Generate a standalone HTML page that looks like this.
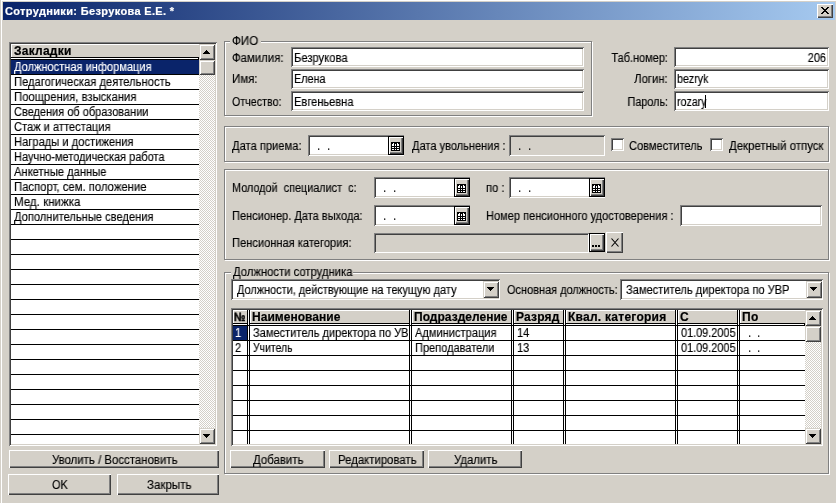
<!DOCTYPE html>
<html lang="ru"><head><meta charset="utf-8"><title>Сотрудники: Безрукова Е.Е.</title>
<style>
html,body{margin:0;padding:0}
body{width:836px;height:503px;overflow:hidden;background:#D4D0C8;position:relative;font-family:"Liberation Sans",sans-serif;font-size:11px}
div{position:absolute;box-sizing:border-box}
.t{position:absolute;white-space:pre;line-height:13px;height:13px;will-change:transform}
</style></head><body>
<div  style="left:1px;top:0px;width:835px;height:1px;background:#fff;"></div>
<div  style="left:1px;top:0px;width:1px;height:503px;background:#fff;"></div>
<div  style="left:3px;top:2px;width:832px;height:18px;background:linear-gradient(to right,#0A246A,#A6CAF0);"></div>
<div  style="left:817px;top:4px;width:16px;height:14px;background:#D4D0C8;box-shadow:inset 1px 1px 0 #fff, inset -1px -1px 0 #404040, inset -2px -2px 0 #808080;"></div>
<svg style="position:absolute;left:821px;top:7px" width="8" height="7" viewBox="0 0 8 7"><path d="M0 0h2v1h1v1h2v-1h1v-1h2v1h-1v1h-1v1h-1v1h1v1h1v1h1v1h-2v-1h-1v-1h-2v1h-1v1h-2v-1h1v-1h1v-1h1v-1h-1v-1h-1v-1h-1z" fill="#000"/></svg>
<div  style="left:9px;top:42px;width:208px;height:404px;background:#fff;box-shadow:inset 1px 1px 0 #808080, inset -1px -1px 0 #fff, inset 2px 2px 0 #404040, inset -2px -2px 0 #D4D0C8;"></div>
<div  style="left:11px;top:44px;width:188px;height:13px;background:#D4D0C8;box-shadow:inset 1px 1px 0 #fff;"></div>
<div  style="left:11px;top:57px;width:188px;height:1px;background:#000;"></div>
<div  style="left:11px;top:58px;width:188px;height:1px;background:#fff;"></div>
<div  style="left:11px;top:59px;width:188px;height:1px;background:#000;"></div>
<div  style="left:198px;top:57px;width:1px;height:3px;background:#000;"></div>
<div  style="left:11px;top:60px;width:188px;height:14px;background:#0A246A;"></div>
<div  style="left:11px;top:74px;width:188px;height:1px;background:#000;"></div>
<div  style="left:11px;top:89px;width:188px;height:1px;background:#000;"></div>
<div  style="left:11px;top:104px;width:188px;height:1px;background:#000;"></div>
<div  style="left:11px;top:119px;width:188px;height:1px;background:#000;"></div>
<div  style="left:11px;top:134px;width:188px;height:1px;background:#000;"></div>
<div  style="left:11px;top:149px;width:188px;height:1px;background:#000;"></div>
<div  style="left:11px;top:164px;width:188px;height:1px;background:#000;"></div>
<div  style="left:11px;top:179px;width:188px;height:1px;background:#000;"></div>
<div  style="left:11px;top:194px;width:188px;height:1px;background:#000;"></div>
<div  style="left:11px;top:209px;width:188px;height:1px;background:#000;"></div>
<div  style="left:11px;top:224px;width:188px;height:1px;background:#000;"></div>
<div  style="left:11px;top:239px;width:188px;height:1px;background:#000;"></div>
<div  style="left:11px;top:254px;width:188px;height:1px;background:#000;"></div>
<div  style="left:11px;top:269px;width:188px;height:1px;background:#000;"></div>
<div  style="left:11px;top:284px;width:188px;height:1px;background:#000;"></div>
<div  style="left:11px;top:299px;width:188px;height:1px;background:#000;"></div>
<div  style="left:11px;top:314px;width:188px;height:1px;background:#000;"></div>
<div  style="left:11px;top:329px;width:188px;height:1px;background:#000;"></div>
<div  style="left:11px;top:344px;width:188px;height:1px;background:#000;"></div>
<div  style="left:11px;top:359px;width:188px;height:1px;background:#000;"></div>
<div  style="left:11px;top:374px;width:188px;height:1px;background:#000;"></div>
<div  style="left:11px;top:389px;width:188px;height:1px;background:#000;"></div>
<div  style="left:11px;top:404px;width:188px;height:1px;background:#000;"></div>
<div  style="left:11px;top:419px;width:188px;height:1px;background:#000;"></div>
<div  style="left:11px;top:434px;width:188px;height:1px;background:#000;"></div>
<div  style="left:199px;top:44px;width:16px;height:400px;background-color:#fff;background-image:linear-gradient(45deg,#D4D0C8 25%,transparent 25%,transparent 75%,#D4D0C8 75%),linear-gradient(45deg,#D4D0C8 25%,transparent 25%,transparent 75%,#D4D0C8 75%);background-size:2px 2px;background-position:0 0,1px 1px;"></div>
<div  style="left:199px;top:44px;width:16px;height:16px;background:#D4D0C8;box-shadow:inset 1px 1px 0 #D4D0C8, inset -1px -1px 0 #404040, inset 2px 2px 0 #fff, inset -2px -2px 0 #808080;"></div>
<div  style="left:206px;top:50px;width:1px;height:1px;background:#000;"></div>
<div  style="left:205px;top:51px;width:3px;height:1px;background:#000;"></div>
<div  style="left:204px;top:52px;width:5px;height:1px;background:#000;"></div>
<div  style="left:203px;top:53px;width:7px;height:1px;background:#000;"></div>
<div  style="left:199px;top:60px;width:16px;height:15px;background:#D4D0C8;box-shadow:inset 1px 1px 0 #D4D0C8, inset -1px -1px 0 #404040, inset 2px 2px 0 #fff, inset -2px -2px 0 #808080;"></div>
<div  style="left:199px;top:428px;width:16px;height:16px;background:#D4D0C8;box-shadow:inset 1px 1px 0 #D4D0C8, inset -1px -1px 0 #404040, inset 2px 2px 0 #fff, inset -2px -2px 0 #808080;"></div>
<div  style="left:203px;top:434px;width:7px;height:1px;background:#000;"></div>
<div  style="left:204px;top:435px;width:5px;height:1px;background:#000;"></div>
<div  style="left:205px;top:436px;width:3px;height:1px;background:#000;"></div>
<div  style="left:206px;top:437px;width:1px;height:1px;background:#000;"></div>
<div  style="left:9px;top:450px;width:210px;height:18px;background:#D4D0C8;box-shadow:inset 1px 1px 0 #fff, inset -1px -1px 0 #404040, inset -2px -2px 0 #808080;"></div>
<div  style="left:8px;top:474px;width:103px;height:21px;background:#D4D0C8;box-shadow:inset 1px 1px 0 #fff, inset -1px -1px 0 #404040, inset -2px -2px 0 #808080;"></div>
<div  style="left:117px;top:474px;width:102px;height:21px;background:#D4D0C8;box-shadow:inset 1px 1px 0 #fff, inset -1px -1px 0 #404040, inset -2px -2px 0 #808080;"></div>
<div  style="left:225px;top:42px;width:368px;height:75px;border:1px solid #fff;box-sizing:border-box;"></div>
<div  style="left:224px;top:41px;width:368px;height:75px;border:1px solid #808080;box-sizing:border-box;"></div>
<div  style="left:230px;top:36px;width:31px;height:12px;background:#D4D0C8;"></div>
<div  style="left:291px;top:47px;width:293px;height:20px;background:#fff;box-shadow:inset 1px 1px 0 #808080, inset -1px -1px 0 #fff, inset 2px 2px 0 #404040, inset -2px -2px 0 #D4D0C8;"></div>
<div  style="left:291px;top:69px;width:293px;height:20px;background:#fff;box-shadow:inset 1px 1px 0 #808080, inset -1px -1px 0 #fff, inset 2px 2px 0 #404040, inset -2px -2px 0 #D4D0C8;"></div>
<div  style="left:291px;top:91px;width:293px;height:20px;background:#fff;box-shadow:inset 1px 1px 0 #808080, inset -1px -1px 0 #fff, inset 2px 2px 0 #404040, inset -2px -2px 0 #D4D0C8;"></div>
<div  style="left:674px;top:47px;width:155px;height:20px;background:#fff;box-shadow:inset 1px 1px 0 #808080, inset -1px -1px 0 #fff, inset 2px 2px 0 #404040, inset -2px -2px 0 #D4D0C8;"></div>
<div  style="left:674px;top:69px;width:155px;height:20px;background:#fff;box-shadow:inset 1px 1px 0 #808080, inset -1px -1px 0 #fff, inset 2px 2px 0 #404040, inset -2px -2px 0 #D4D0C8;"></div>
<div  style="left:674px;top:91px;width:155px;height:20px;background:#fff;box-shadow:inset 1px 1px 0 #808080, inset -1px -1px 0 #fff, inset 2px 2px 0 #404040, inset -2px -2px 0 #D4D0C8;"></div>
<div  style="left:705px;top:95px;width:1px;height:13px;background:#000;"></div>
<div  style="left:225px;top:127px;width:605px;height:36px;border:1px solid #fff;box-sizing:border-box;"></div>
<div  style="left:224px;top:126px;width:605px;height:36px;border:1px solid #808080;box-sizing:border-box;"></div>
<div  style="left:308px;top:135px;width:96px;height:21px;background:#fff;box-shadow:inset 1px 1px 0 #808080, inset -1px -1px 0 #fff, inset 2px 2px 0 #404040, inset -2px -2px 0 #D4D0C8;"></div>
<div  style="left:388px;top:136px;width:16px;height:19px;background:#D4D0C8;border:1px solid #000;box-sizing:border-box;box-shadow:inset 1px 1px 0 #fff, inset -1px -1px 0 #404040, inset -2px -2px 0 #808080;"></div>
<div  style="left:391px;top:142px;width:9px;height:9px;background:#000;"></div>
<div  style="left:392px;top:144px;width:7px;height:6px;background:#fff;"></div>
<div  style="left:393px;top:143px;width:1px;height:1px;background:#fff;"></div>
<div  style="left:397px;top:143px;width:1px;height:1px;background:#fff;"></div>
<div  style="left:394px;top:144px;width:1px;height:6px;background:#000;"></div>
<div  style="left:396px;top:144px;width:1px;height:6px;background:#000;"></div>
<div  style="left:392px;top:146px;width:7px;height:1px;background:#000;"></div>
<div  style="left:392px;top:148px;width:7px;height:1px;background:#000;"></div>
<div  style="left:509px;top:135px;width:96px;height:21px;background:#D4D0C8;box-shadow:inset 1px 1px 0 #808080, inset -1px -1px 0 #fff, inset 2px 2px 0 #404040, inset -2px -2px 0 #D4D0C8;"></div>
<div  style="left:611px;top:138px;width:13px;height:13px;background:#fff;box-shadow:inset 1px 1px 0 #808080, inset -1px -1px 0 #fff, inset 2px 2px 0 #404040, inset -2px -2px 0 #D4D0C8;"></div>
<div  style="left:710px;top:138px;width:13px;height:13px;background:#fff;box-shadow:inset 1px 1px 0 #808080, inset -1px -1px 0 #fff, inset 2px 2px 0 #404040, inset -2px -2px 0 #D4D0C8;"></div>
<div  style="left:225px;top:170px;width:605px;height:91px;border:1px solid #fff;box-sizing:border-box;"></div>
<div  style="left:224px;top:169px;width:605px;height:91px;border:1px solid #808080;box-sizing:border-box;"></div>
<div  style="left:374px;top:177px;width:96px;height:21px;background:#fff;box-shadow:inset 1px 1px 0 #808080, inset -1px -1px 0 #fff, inset 2px 2px 0 #404040, inset -2px -2px 0 #D4D0C8;"></div>
<div  style="left:454px;top:178px;width:16px;height:19px;background:#D4D0C8;border:1px solid #000;box-sizing:border-box;box-shadow:inset 1px 1px 0 #fff, inset -1px -1px 0 #404040, inset -2px -2px 0 #808080;"></div>
<div  style="left:457px;top:184px;width:9px;height:9px;background:#000;"></div>
<div  style="left:458px;top:186px;width:7px;height:6px;background:#fff;"></div>
<div  style="left:459px;top:185px;width:1px;height:1px;background:#fff;"></div>
<div  style="left:463px;top:185px;width:1px;height:1px;background:#fff;"></div>
<div  style="left:460px;top:186px;width:1px;height:6px;background:#000;"></div>
<div  style="left:462px;top:186px;width:1px;height:6px;background:#000;"></div>
<div  style="left:458px;top:188px;width:7px;height:1px;background:#000;"></div>
<div  style="left:458px;top:190px;width:7px;height:1px;background:#000;"></div>
<div  style="left:509px;top:177px;width:96px;height:21px;background:#fff;box-shadow:inset 1px 1px 0 #808080, inset -1px -1px 0 #fff, inset 2px 2px 0 #404040, inset -2px -2px 0 #D4D0C8;"></div>
<div  style="left:589px;top:178px;width:16px;height:19px;background:#D4D0C8;border:1px solid #000;box-sizing:border-box;box-shadow:inset 1px 1px 0 #fff, inset -1px -1px 0 #404040, inset -2px -2px 0 #808080;"></div>
<div  style="left:592px;top:184px;width:9px;height:9px;background:#000;"></div>
<div  style="left:593px;top:186px;width:7px;height:6px;background:#fff;"></div>
<div  style="left:594px;top:185px;width:1px;height:1px;background:#fff;"></div>
<div  style="left:598px;top:185px;width:1px;height:1px;background:#fff;"></div>
<div  style="left:595px;top:186px;width:1px;height:6px;background:#000;"></div>
<div  style="left:597px;top:186px;width:1px;height:6px;background:#000;"></div>
<div  style="left:593px;top:188px;width:7px;height:1px;background:#000;"></div>
<div  style="left:593px;top:190px;width:7px;height:1px;background:#000;"></div>
<div  style="left:374px;top:205px;width:96px;height:21px;background:#fff;box-shadow:inset 1px 1px 0 #808080, inset -1px -1px 0 #fff, inset 2px 2px 0 #404040, inset -2px -2px 0 #D4D0C8;"></div>
<div  style="left:454px;top:206px;width:16px;height:19px;background:#D4D0C8;border:1px solid #000;box-sizing:border-box;box-shadow:inset 1px 1px 0 #fff, inset -1px -1px 0 #404040, inset -2px -2px 0 #808080;"></div>
<div  style="left:457px;top:212px;width:9px;height:9px;background:#000;"></div>
<div  style="left:458px;top:214px;width:7px;height:6px;background:#fff;"></div>
<div  style="left:459px;top:213px;width:1px;height:1px;background:#fff;"></div>
<div  style="left:463px;top:213px;width:1px;height:1px;background:#fff;"></div>
<div  style="left:460px;top:214px;width:1px;height:6px;background:#000;"></div>
<div  style="left:462px;top:214px;width:1px;height:6px;background:#000;"></div>
<div  style="left:458px;top:216px;width:7px;height:1px;background:#000;"></div>
<div  style="left:458px;top:218px;width:7px;height:1px;background:#000;"></div>
<div  style="left:680px;top:205px;width:142px;height:21px;background:#fff;box-shadow:inset 1px 1px 0 #808080, inset -1px -1px 0 #fff, inset 2px 2px 0 #404040, inset -2px -2px 0 #D4D0C8;"></div>
<div  style="left:374px;top:233px;width:215px;height:20px;background:#D4D0C8;box-shadow:inset 1px 1px 0 #808080, inset -1px -1px 0 #fff, inset 2px 2px 0 #404040, inset -2px -2px 0 #D4D0C8;"></div>
<div  style="left:589px;top:233px;width:16px;height:19px;background:#D4D0C8;border:1px solid #000;box-sizing:border-box;box-shadow:inset 1px 1px 0 #fff, inset -1px -1px 0 #404040, inset -2px -2px 0 #808080;"></div>
<div  style="left:592px;top:245px;width:2px;height:2px;background:#000;"></div>
<div  style="left:595px;top:245px;width:2px;height:2px;background:#000;"></div>
<div  style="left:598px;top:245px;width:2px;height:2px;background:#000;"></div>
<div  style="left:606px;top:232px;width:17px;height:21px;background:#D4D0C8;box-shadow:inset 1px 1px 0 #fff, inset -1px -1px 0 #404040, inset -2px -2px 0 #808080;"></div>
<svg style="position:absolute;left:611px;top:238px" width="8" height="9" viewBox="0 0 8 9"><path d="M0.5 0.5L7.5 8.5M7.5 0.5L0.5 8.5" stroke="#000" stroke-width="1.1" fill="none"/></svg>
<div  style="left:225px;top:273px;width:605px;height:202px;border:1px solid #fff;box-sizing:border-box;"></div>
<div  style="left:224px;top:272px;width:605px;height:202px;border:1px solid #808080;box-sizing:border-box;"></div>
<div  style="left:231px;top:266px;width:122px;height:12px;background:#D4D0C8;"></div>
<div  style="left:231px;top:279px;width:269px;height:21px;background:#fff;box-shadow:inset 1px 1px 0 #808080, inset -1px -1px 0 #fff, inset 2px 2px 0 #404040, inset -2px -2px 0 #D4D0C8;"></div>
<div  style="left:483px;top:281px;width:16px;height:17px;background:#D4D0C8;box-shadow:inset 1px 1px 0 #D4D0C8, inset -1px -1px 0 #404040, inset 2px 2px 0 #fff, inset -2px -2px 0 #808080;"></div>
<div  style="left:487px;top:287px;width:7px;height:1px;background:#000;"></div>
<div  style="left:488px;top:288px;width:5px;height:1px;background:#000;"></div>
<div  style="left:489px;top:289px;width:3px;height:1px;background:#000;"></div>
<div  style="left:490px;top:290px;width:1px;height:1px;background:#000;"></div>
<div  style="left:620px;top:279px;width:203px;height:21px;background:#fff;box-shadow:inset 1px 1px 0 #808080, inset -1px -1px 0 #fff, inset 2px 2px 0 #404040, inset -2px -2px 0 #D4D0C8;"></div>
<div  style="left:806px;top:281px;width:16px;height:17px;background:#D4D0C8;box-shadow:inset 1px 1px 0 #D4D0C8, inset -1px -1px 0 #404040, inset 2px 2px 0 #fff, inset -2px -2px 0 #808080;"></div>
<div  style="left:810px;top:287px;width:7px;height:1px;background:#000;"></div>
<div  style="left:811px;top:288px;width:5px;height:1px;background:#000;"></div>
<div  style="left:812px;top:289px;width:3px;height:1px;background:#000;"></div>
<div  style="left:813px;top:290px;width:1px;height:1px;background:#000;"></div>
<div  style="left:231px;top:308px;width:592px;height:138px;background:#fff;box-shadow:inset 1px 1px 0 #808080, inset -1px -1px 0 #fff, inset 2px 2px 0 #404040, inset -2px -2px 0 #D4D0C8;"></div>
<div  style="left:233px;top:310px;width:14px;height:13px;background:#D4D0C8;box-shadow:inset 1px 1px 0 #fff;"></div>
<div  style="left:250px;top:310px;width:159px;height:13px;background:#D4D0C8;box-shadow:inset 1px 1px 0 #fff;"></div>
<div  style="left:412px;top:310px;width:99px;height:13px;background:#D4D0C8;box-shadow:inset 1px 1px 0 #fff;"></div>
<div  style="left:514px;top:310px;width:49px;height:13px;background:#D4D0C8;box-shadow:inset 1px 1px 0 #fff;"></div>
<div  style="left:566px;top:310px;width:109px;height:13px;background:#D4D0C8;box-shadow:inset 1px 1px 0 #fff;"></div>
<div  style="left:678px;top:310px;width:59px;height:13px;background:#D4D0C8;box-shadow:inset 1px 1px 0 #fff;"></div>
<div  style="left:740px;top:310px;width:65px;height:13px;background:#D4D0C8;box-shadow:inset 1px 1px 0 #fff;"></div>
<div  style="left:233px;top:323px;width:572px;height:1px;background:#000;"></div>
<div  style="left:233px;top:324px;width:572px;height:1px;background:#fff;"></div>
<div  style="left:804px;top:323px;width:1px;height:3px;background:#000;"></div>
<div  style="left:233px;top:325px;width:572px;height:1px;background:#000;"></div>
<div  style="left:233px;top:340px;width:572px;height:1px;background:#000;"></div>
<div  style="left:233px;top:355px;width:572px;height:1px;background:#000;"></div>
<div  style="left:233px;top:370px;width:572px;height:1px;background:#000;"></div>
<div  style="left:233px;top:385px;width:572px;height:1px;background:#000;"></div>
<div  style="left:233px;top:400px;width:572px;height:1px;background:#000;"></div>
<div  style="left:233px;top:415px;width:572px;height:1px;background:#000;"></div>
<div  style="left:233px;top:430px;width:572px;height:1px;background:#000;"></div>
<div  style="left:247px;top:310px;width:1px;height:134px;background:#000;"></div>
<div  style="left:249px;top:310px;width:1px;height:134px;background:#000;"></div>
<div  style="left:248px;top:310px;width:1px;height:14px;background:#fff;"></div>
<div  style="left:409px;top:310px;width:1px;height:134px;background:#000;"></div>
<div  style="left:411px;top:310px;width:1px;height:134px;background:#000;"></div>
<div  style="left:410px;top:310px;width:1px;height:14px;background:#fff;"></div>
<div  style="left:511px;top:310px;width:1px;height:134px;background:#000;"></div>
<div  style="left:513px;top:310px;width:1px;height:134px;background:#000;"></div>
<div  style="left:512px;top:310px;width:1px;height:14px;background:#fff;"></div>
<div  style="left:563px;top:310px;width:1px;height:134px;background:#000;"></div>
<div  style="left:565px;top:310px;width:1px;height:134px;background:#000;"></div>
<div  style="left:564px;top:310px;width:1px;height:14px;background:#fff;"></div>
<div  style="left:675px;top:310px;width:1px;height:134px;background:#000;"></div>
<div  style="left:677px;top:310px;width:1px;height:134px;background:#000;"></div>
<div  style="left:676px;top:310px;width:1px;height:14px;background:#fff;"></div>
<div  style="left:737px;top:310px;width:1px;height:134px;background:#000;"></div>
<div  style="left:739px;top:310px;width:1px;height:134px;background:#000;"></div>
<div  style="left:738px;top:310px;width:1px;height:14px;background:#fff;"></div>
<div  style="left:805px;top:310px;width:1px;height:134px;background:#000;"></div>
<div  style="left:233px;top:326px;width:14px;height:14px;background:#0A246A;"></div>
<div  style="left:805px;top:310px;width:16px;height:134px;background-color:#fff;background-image:linear-gradient(45deg,#D4D0C8 25%,transparent 25%,transparent 75%,#D4D0C8 75%),linear-gradient(45deg,#D4D0C8 25%,transparent 25%,transparent 75%,#D4D0C8 75%);background-size:2px 2px;background-position:0 0,1px 1px;"></div>
<div  style="left:805px;top:310px;width:16px;height:16px;background:#D4D0C8;box-shadow:inset 1px 1px 0 #D4D0C8, inset -1px -1px 0 #404040, inset 2px 2px 0 #fff, inset -2px -2px 0 #808080;"></div>
<div  style="left:812px;top:316px;width:1px;height:1px;background:#000;"></div>
<div  style="left:811px;top:317px;width:3px;height:1px;background:#000;"></div>
<div  style="left:810px;top:318px;width:5px;height:1px;background:#000;"></div>
<div  style="left:809px;top:319px;width:7px;height:1px;background:#000;"></div>
<div  style="left:805px;top:326px;width:16px;height:16px;background:#D4D0C8;box-shadow:inset 1px 1px 0 #D4D0C8, inset -1px -1px 0 #404040, inset 2px 2px 0 #fff, inset -2px -2px 0 #808080;"></div>
<div  style="left:805px;top:428px;width:16px;height:16px;background:#D4D0C8;box-shadow:inset 1px 1px 0 #D4D0C8, inset -1px -1px 0 #404040, inset 2px 2px 0 #fff, inset -2px -2px 0 #808080;"></div>
<div  style="left:809px;top:434px;width:7px;height:1px;background:#000;"></div>
<div  style="left:810px;top:435px;width:5px;height:1px;background:#000;"></div>
<div  style="left:811px;top:436px;width:3px;height:1px;background:#000;"></div>
<div  style="left:812px;top:437px;width:1px;height:1px;background:#000;"></div>
<div  style="left:230px;top:450px;width:95px;height:18px;background:#D4D0C8;box-shadow:inset 1px 1px 0 #fff, inset -1px -1px 0 #404040, inset -2px -2px 0 #808080;"></div>
<div  style="left:329px;top:450px;width:95px;height:18px;background:#D4D0C8;box-shadow:inset 1px 1px 0 #fff, inset -1px -1px 0 #404040, inset -2px -2px 0 #808080;"></div>
<div  style="left:428px;top:450px;width:94px;height:18px;background:#D4D0C8;box-shadow:inset 1px 1px 0 #fff, inset -1px -1px 0 #404040, inset -2px -2px 0 #808080;"></div>
<span class="t" style="top:5px;color:#fff;font-size:11px;font-weight:bold;-webkit-text-stroke:0.2px;letter-spacing:0.348px;left:5px;">Сотрудники: Безрукова Е.Е. *</span>
<span class="t" style="top:45px;color:#000;font-size:12px;font-weight:bold;-webkit-text-stroke:0.2px;letter-spacing:0.232px;left:14px;">Закладки</span>
<span class="t" style="top:61px;color:#fff;font-size:12px;-webkit-text-stroke:0.15px;left:14px;transform:scaleX(0.9217);transform-origin:0 0;">Должностная информация</span>
<span class="t" style="top:76px;color:#000;font-size:12px;-webkit-text-stroke:0.15px;left:14px;transform:scaleX(0.9335);transform-origin:0 0;">Педагогическая деятельность</span>
<span class="t" style="top:91px;color:#000;font-size:12px;-webkit-text-stroke:0.15px;left:14px;transform:scaleX(0.9417);transform-origin:0 0;">Поощрения, взыскания</span>
<span class="t" style="top:106px;color:#000;font-size:12px;-webkit-text-stroke:0.15px;left:14px;transform:scaleX(0.9162);transform-origin:0 0;">Сведения об образовании</span>
<span class="t" style="top:121px;color:#000;font-size:12px;-webkit-text-stroke:0.15px;left:14px;transform:scaleX(0.9265);transform-origin:0 0;">Стаж и аттестация</span>
<span class="t" style="top:136px;color:#000;font-size:12px;-webkit-text-stroke:0.15px;left:14px;transform:scaleX(0.9302);transform-origin:0 0;">Награды и достижения</span>
<span class="t" style="top:151px;color:#000;font-size:12px;-webkit-text-stroke:0.15px;left:14px;transform:scaleX(0.9156);transform-origin:0 0;">Научно-методическая работа</span>
<span class="t" style="top:166px;color:#000;font-size:12px;-webkit-text-stroke:0.15px;left:14px;transform:scaleX(0.9317);transform-origin:0 0;">Анкетные данные</span>
<span class="t" style="top:181px;color:#000;font-size:12px;-webkit-text-stroke:0.15px;left:14px;transform:scaleX(0.9423);transform-origin:0 0;">Паспорт, сем. положение</span>
<span class="t" style="top:196px;color:#000;font-size:12px;-webkit-text-stroke:0.15px;left:14px;transform:scaleX(0.9635);transform-origin:0 0;">Мед. книжка</span>
<span class="t" style="top:211px;color:#000;font-size:12px;-webkit-text-stroke:0.15px;left:14px;transform:scaleX(0.9270);transform-origin:0 0;">Дополнительные сведения</span>
<span class="t" style="top:454px;color:#000;font-size:12px;-webkit-text-stroke:0.15px;left:52px;transform:scaleX(0.9514);transform-origin:0 0;">Уволить / Восстановить</span>
<span class="t" style="top:479px;color:#000;font-size:12px;-webkit-text-stroke:0.15px;left:52px;transform:scaleX(0.9150);transform-origin:0 0;">OK</span>
<span class="t" style="top:479px;color:#000;font-size:12px;-webkit-text-stroke:0.15px;left:147px;transform:scaleX(0.9628);transform-origin:0 0;">Закрыть</span>
<span class="t" style="top:35px;color:#000;font-size:12px;-webkit-text-stroke:0.15px;left:232px;transform:scaleX(0.9700);transform-origin:0 0;">ФИО</span>
<span class="t" style="top:52px;color:#000;font-size:12px;-webkit-text-stroke:0.15px;left:232px;transform:scaleX(0.9485);transform-origin:0 0;">Фамилия:</span>
<span class="t" style="top:52px;color:#000;font-size:12px;-webkit-text-stroke:0.15px;left:294px;transform:scaleX(0.9335);transform-origin:0 0;">Безрукова</span>
<span class="t" style="top:73px;color:#000;font-size:12px;-webkit-text-stroke:0.15px;left:232px;transform:scaleX(0.9544);transform-origin:0 0;">Имя:</span>
<span class="t" style="top:73px;color:#000;font-size:12px;-webkit-text-stroke:0.15px;left:294px;transform:scaleX(0.9004);transform-origin:0 0;">Елена</span>
<span class="t" style="top:96px;color:#000;font-size:12px;-webkit-text-stroke:0.15px;left:232px;transform:scaleX(0.8919);transform-origin:0 0;">Отчество:</span>
<span class="t" style="top:96px;color:#000;font-size:12px;-webkit-text-stroke:0.15px;left:294px;transform:scaleX(0.9238);transform-origin:0 0;">Евгеньевна</span>
<span class="t" style="top:52px;color:#000;font-size:12px;-webkit-text-stroke:0.15px;right:168px;transform:scaleX(0.9127);transform-origin:100% 0;">Таб.номер:</span>
<span class="t" style="top:52px;color:#000;font-size:12px;-webkit-text-stroke:0.15px;right:10px;transform:scaleX(0.9150);transform-origin:100% 0;">206</span>
<span class="t" style="top:73px;color:#000;font-size:12px;-webkit-text-stroke:0.15px;right:168px;transform:scaleX(0.9412);transform-origin:100% 0;">Логин:</span>
<span class="t" style="top:73px;color:#000;font-size:12px;-webkit-text-stroke:0.15px;left:677px;transform:scaleX(0.8912);transform-origin:0 0;">bezryk</span>
<span class="t" style="top:96px;color:#000;font-size:12px;-webkit-text-stroke:0.15px;right:168px;transform:scaleX(0.9003);transform-origin:100% 0;">Пароль:</span>
<span class="t" style="top:96px;color:#000;font-size:12px;-webkit-text-stroke:0.15px;left:677px;transform:scaleX(0.8847);transform-origin:0 0;">rozary</span>
<span class="t" style="top:140px;color:#000;font-size:12px;-webkit-text-stroke:0.15px;left:232px;transform:scaleX(0.9302);transform-origin:0 0;">Дата приема:</span>
<span class="t" style="top:140px;color:#000;font-size:12px;-webkit-text-stroke:0.15px;left:317px;transform:scaleX(0.9150);transform-origin:0 0;">.</span>
<span class="t" style="top:140px;color:#000;font-size:12px;-webkit-text-stroke:0.15px;left:327px;transform:scaleX(0.9150);transform-origin:0 0;">.</span>
<span class="t" style="top:140px;color:#000;font-size:12px;-webkit-text-stroke:0.15px;left:412px;transform:scaleX(0.9202);transform-origin:0 0;">Дата увольнения :</span>
<span class="t" style="top:140px;color:#000;font-size:12px;-webkit-text-stroke:0.15px;left:518px;transform:scaleX(0.9150);transform-origin:0 0;">.</span>
<span class="t" style="top:140px;color:#000;font-size:12px;-webkit-text-stroke:0.15px;left:528px;transform:scaleX(0.9150);transform-origin:0 0;">.</span>
<span class="t" style="top:140px;color:#000;font-size:12px;-webkit-text-stroke:0.15px;left:629px;transform:scaleX(0.9234);transform-origin:0 0;">Совместитель</span>
<span class="t" style="top:140px;color:#000;font-size:12px;-webkit-text-stroke:0.15px;left:729px;transform:scaleX(0.9515);transform-origin:0 0;">Декретный отпуск</span>
<span class="t" style="top:182px;color:#000;font-size:12px;-webkit-text-stroke:0.15px;left:232px;transform:scaleX(0.9037);transform-origin:0 0;">Молодой  специалист  с:</span>
<span class="t" style="top:182px;color:#000;font-size:12px;-webkit-text-stroke:0.15px;left:383px;transform:scaleX(0.9150);transform-origin:0 0;">.</span>
<span class="t" style="top:182px;color:#000;font-size:12px;-webkit-text-stroke:0.15px;left:393px;transform:scaleX(0.9150);transform-origin:0 0;">.</span>
<span class="t" style="top:182px;color:#000;font-size:12px;-webkit-text-stroke:0.15px;left:486px;transform:scaleX(0.9323);transform-origin:0 0;">по :</span>
<span class="t" style="top:182px;color:#000;font-size:12px;-webkit-text-stroke:0.15px;left:518px;transform:scaleX(0.9150);transform-origin:0 0;">.</span>
<span class="t" style="top:182px;color:#000;font-size:12px;-webkit-text-stroke:0.15px;left:528px;transform:scaleX(0.9150);transform-origin:0 0;">.</span>
<span class="t" style="top:210px;color:#000;font-size:12px;-webkit-text-stroke:0.15px;left:232px;transform:scaleX(0.9181);transform-origin:0 0;">Пенсионер. Дата выхода:</span>
<span class="t" style="top:210px;color:#000;font-size:12px;-webkit-text-stroke:0.15px;left:383px;transform:scaleX(0.9150);transform-origin:0 0;">.</span>
<span class="t" style="top:210px;color:#000;font-size:12px;-webkit-text-stroke:0.15px;left:393px;transform:scaleX(0.9150);transform-origin:0 0;">.</span>
<span class="t" style="top:210px;color:#000;font-size:12px;-webkit-text-stroke:0.15px;left:486px;transform:scaleX(0.9210);transform-origin:0 0;">Номер пенсионного удостоверения :</span>
<span class="t" style="top:237px;color:#000;font-size:12px;-webkit-text-stroke:0.15px;left:232px;transform:scaleX(0.9261);transform-origin:0 0;">Пенсионная категория:</span>
<span class="t" style="top:266px;color:#000;font-size:12px;-webkit-text-stroke:0.15px;left:233px;transform:scaleX(0.9391);transform-origin:0 0;">Должности сотрудника</span>
<span class="t" style="top:284px;color:#000;font-size:12px;-webkit-text-stroke:0.15px;left:237px;transform:scaleX(0.9112);transform-origin:0 0;">Должности, действующие на текущую дату</span>
<span class="t" style="top:284px;color:#000;font-size:12px;-webkit-text-stroke:0.15px;left:507px;transform:scaleX(0.9135);transform-origin:0 0;">Основная должность:</span>
<span class="t" style="top:284px;color:#000;font-size:12px;-webkit-text-stroke:0.15px;left:626px;transform:scaleX(0.9260);transform-origin:0 0;">Заместитель директора по УВР</span>
<span class="t" style="top:311px;color:#000;font-size:12px;font-weight:bold;-webkit-text-stroke:0.45px;left:234px;transform:scaleX(0.8500);transform-origin:0 0;">№</span>
<span class="t" style="top:311px;color:#000;font-size:12px;font-weight:bold;-webkit-text-stroke:0.2px;letter-spacing:0.038px;left:252px;">Наименование</span>
<span class="t" style="top:311px;color:#000;font-size:12px;font-weight:bold;-webkit-text-stroke:0.2px;letter-spacing:0.018px;left:414px;">Подразделение</span>
<span class="t" style="top:311px;color:#000;font-size:12px;font-weight:bold;-webkit-text-stroke:0.2px;letter-spacing:0.180px;left:516px;">Разряд</span>
<span class="t" style="top:311px;color:#000;font-size:12px;font-weight:bold;-webkit-text-stroke:0.2px;letter-spacing:0.258px;left:568px;">Квал. категория</span>
<span class="t" style="top:311px;color:#000;font-size:12px;font-weight:bold;-webkit-text-stroke:0.2px;left:680px;">С</span>
<span class="t" style="top:311px;color:#000;font-size:12px;font-weight:bold;-webkit-text-stroke:0.2px;letter-spacing:0.266px;left:742px;">По</span>
<span class="t" style="top:327px;color:#fff;font-size:12px;-webkit-text-stroke:0.15px;left:235px;transform:scaleX(0.9150);transform-origin:0 0;">1</span>
<span class="t" style="top:327px;color:#000;font-size:12px;-webkit-text-stroke:0.15px;left:253px;transform:scaleX(0.9225);transform-origin:0 0;">Заместитель директора по УВ</span>
<span class="t" style="top:327px;color:#000;font-size:12px;-webkit-text-stroke:0.15px;left:415px;transform:scaleX(0.9238);transform-origin:0 0;">Администрация</span>
<span class="t" style="top:327px;color:#000;font-size:12px;-webkit-text-stroke:0.15px;left:517px;transform:scaleX(0.9150);transform-origin:0 0;">14</span>
<span class="t" style="top:327px;color:#000;font-size:12px;-webkit-text-stroke:0.15px;left:681px;transform:scaleX(0.9074);transform-origin:0 0;">01.09.2005</span>
<span class="t" style="top:327px;color:#000;font-size:12px;-webkit-text-stroke:0.15px;left:748px;transform:scaleX(0.9150);transform-origin:0 0;">.</span>
<span class="t" style="top:327px;color:#000;font-size:12px;-webkit-text-stroke:0.15px;left:757px;transform:scaleX(0.9150);transform-origin:0 0;">.</span>
<span class="t" style="top:342px;color:#000;font-size:12px;-webkit-text-stroke:0.15px;left:235px;transform:scaleX(0.9150);transform-origin:0 0;">2</span>
<span class="t" style="top:342px;color:#000;font-size:12px;-webkit-text-stroke:0.15px;left:253px;transform:scaleX(0.8687);transform-origin:0 0;">Учитель</span>
<span class="t" style="top:342px;color:#000;font-size:12px;-webkit-text-stroke:0.15px;left:415px;transform:scaleX(0.9184);transform-origin:0 0;">Преподаватели</span>
<span class="t" style="top:342px;color:#000;font-size:12px;-webkit-text-stroke:0.15px;left:517px;transform:scaleX(0.9150);transform-origin:0 0;">13</span>
<span class="t" style="top:342px;color:#000;font-size:12px;-webkit-text-stroke:0.15px;left:681px;transform:scaleX(0.9074);transform-origin:0 0;">01.09.2005</span>
<span class="t" style="top:342px;color:#000;font-size:12px;-webkit-text-stroke:0.15px;left:748px;transform:scaleX(0.9150);transform-origin:0 0;">.</span>
<span class="t" style="top:342px;color:#000;font-size:12px;-webkit-text-stroke:0.15px;left:757px;transform:scaleX(0.9150);transform-origin:0 0;">.</span>
<span class="t" style="top:454px;color:#000;font-size:12px;-webkit-text-stroke:0.15px;left:253px;transform:scaleX(0.9520);transform-origin:0 0;">Добавить</span>
<span class="t" style="top:454px;color:#000;font-size:12px;-webkit-text-stroke:0.15px;left:338px;transform:scaleX(0.9469);transform-origin:0 0;">Редактировать</span>
<span class="t" style="top:454px;color:#000;font-size:12px;-webkit-text-stroke:0.15px;left:454px;transform:scaleX(0.9492);transform-origin:0 0;">Удалить</span>
</body></html>
